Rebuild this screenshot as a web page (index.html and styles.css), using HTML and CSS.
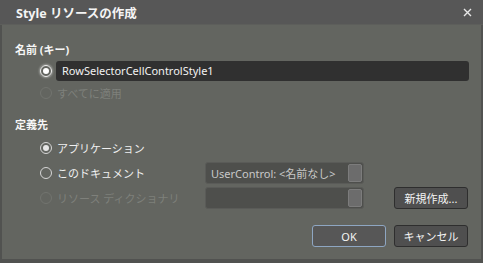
FILE: index.html
```html
<!DOCTYPE html>
<html lang="ja">
<head>
    <meta charset="UTF-8">
    <title>Style リソースの作成</title>
    <link rel="stylesheet" href="styles.css">
</head>
<body>

    <div class="dialog">
        <div class="titlebar">
            <span class="title">Style リソースの作成</span>
            <svg class="close" width="9" height="9" viewBox="0 0 9 9">
                <path d="M1 1 L8 8 M8 1 L1 8" stroke="#e8e8e8" stroke-width="1.4"/>
            </svg>
        </div>

        <div class="content">
            <div class="section-label">名前 (キー)</div>

            <div class="row">
                <span class="radio checked focus"></span>
                <div class="textbox">RowSelectorCellControlStyle1</div>
            </div>
            <div class="row">
                <span class="radio disabled"></span>
                <span class="opt disabled-text">すべてに適用</span>
            </div>

            <div class="section-label second">定義先</div>

            <div class="row tall">
                <span class="radio checked"></span>
                <span class="opt">アプリケーション</span>
            </div>
            <div class="row tall">
                <span class="radio"></span>
                <span class="opt wide">このドキュメント</span>
                <div class="combo">
                    <span class="combo-text">UserControl: &lt;名前なし&gt;</span>
                    <span class="combo-btn"></span>
                </div>
            </div>
            <div class="row tall">
                <span class="radio disabled"></span>
                <span class="opt wide disabled-text">リソース ディクショナリ</span>
                <div class="combo">
                    <span class="combo-text"></span>
                    <span class="combo-btn"></span>
                </div>
                <button class="btn new-btn">新規作成...</button>
            </div>

            <div class="footer">
                <button class="btn ok-btn">OK</button>
                <button class="btn">キャンセル</button>
            </div>
        </div>
    </div>

</body>
</html>
```

FILE: styles.css
```css
body {
    margin: 0;
    font-family: "Noto Sans", "Noto Sans CJK JP", sans-serif;
    font-size: 11px;
    color: #f0f0f0;
    background-color: #626460;
}

.dialog {
    width: 483px;
    height: 263px;
    display: flex;
    flex-direction: column;
}

.titlebar {
    height: 24px;
    background-color: #575757;
    border-bottom: 1px solid #5d5e5b;
    display: flex;
    align-items: center;
    justify-content: space-between;
    padding: 0 11px 0 16px;
}

.title {
    font-weight: bold;
    font-size: 12.5px;
    color: #f4f4f4;
}

.close {
    display: block;
}

.content {
    flex: 1;
    background-color: #636560;
    border-left: 2px solid #515250;
    border-right: 2px solid #515250;
    border-bottom: 4px solid #515250;
    padding-top: 15px;
}

.section-label {
    height: 20px;
    line-height: 20px;
    padding-left: 13px;
    font-weight: bold;
    color: #f6f6f6;
}

.section-label.second {
    margin-top: 11px;
}

.row {
    height: 22px;
    display: flex;
    align-items: center;
    padding-left: 38px;
}

.row.tall {
    height: 25px;
}

.radio {
    width: 10px;
    height: 10px;
    border: 1px solid #d6d6d6;
    border-radius: 50%;
    box-sizing: content-box;
    flex-shrink: 0;
    position: relative;
}

.radio.checked::after {
    content: "";
    position: absolute;
    left: 2px;
    top: 2px;
    width: 6px;
    height: 6px;
    border-radius: 50%;
    background-color: #e6e6e6;
}

.radio.focus {
    border-color: #f0f0f0;
    box-shadow: 0 0 2px 1px rgba(255, 255, 255, 0.35);
}

.radio.focus::after {
    background-color: #ffffff;
}

.radio.disabled {
    border-color: #72746f;
}

.opt {
    margin-left: 5px;
    white-space: nowrap;
}

.opt.wide {
    width: 148px;
}

.disabled-text {
    color: #7e807b;
}

.textbox {
    margin-left: 4px;
    width: 413px;
    height: 20px;
    line-height: 20px;
    background-color: #303030;
    border-radius: 3px;
    padding-left: 6px;
    box-sizing: border-box;
    color: #f2f2f2;
}

.combo {
    width: 159px;
    height: 22px;
    background-color: #4e4f4c;
    border: 1px solid #5a5b58;
    border-radius: 3px;
    box-sizing: border-box;
    display: flex;
    align-items: center;
    justify-content: space-between;
    padding: 0 1px 0 5px;
}

.combo-text {
    color: #c8c8c8;
    white-space: nowrap;
}

.combo-btn {
    width: 14px;
    height: 18px;
    background-color: #6c6c6c;
    border: 1px solid #7c7c7c;
    border-radius: 2px;
    box-sizing: border-box;
}

.btn {
    font-family: "Noto Sans", "Noto Sans CJK JP", sans-serif;
    font-size: 11px;
    color: #f4f4f4;
    background-color: #4f4f4f;
    border: 1px solid #2e2e2e;
    border-radius: 3px;
    height: 22px;
    width: 74px;
    padding: 0;
}

.new-btn {
    margin-left: 30px;
}

.footer {
    display: flex;
    justify-content: flex-end;
    gap: 8px;
    margin-top: 15px;
    padding-right: 13px;
}

.ok-btn {
    background-color: #575757;
    border-color: #8ea6c2;
}
```
